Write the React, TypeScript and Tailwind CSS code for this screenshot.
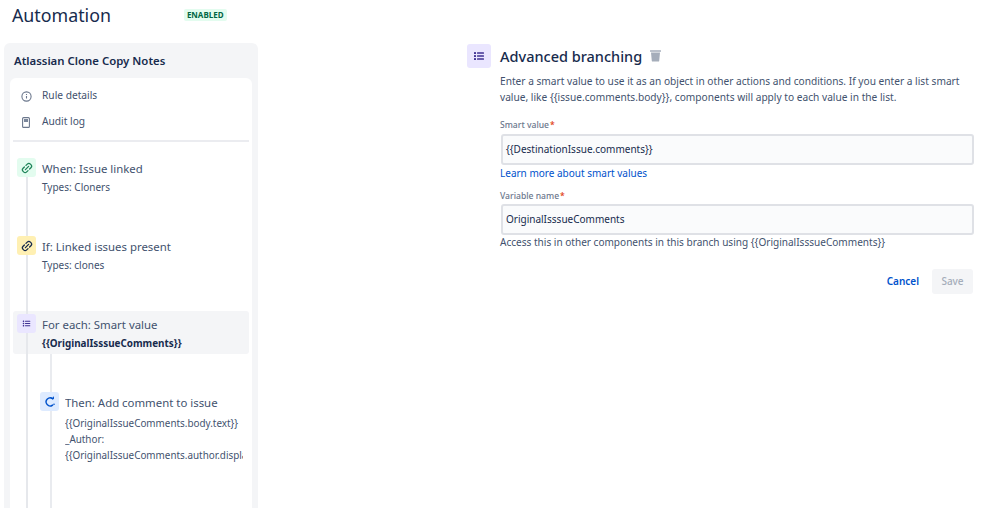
const font = "[font-family:'Noto_Sans',sans-serif]";

function ListIcon({ size = 12 }: { size?: number }) {
  return (
    <svg width={size} height={size} viewBox="0 0 12 12" fill="#403294">
      <rect x="1" y="2" width="2" height="2" rx="0.6" />
      <rect x="4" y="2.3" width="7" height="1.4" rx="0.5" />
      <rect x="1" y="5" width="2" height="2" rx="0.6" />
      <rect x="4" y="5.3" width="7" height="1.4" rx="0.5" />
      <rect x="1" y="8" width="2" height="2" rx="0.6" />
      <rect x="4" y="8.3" width="7" height="1.4" rx="0.5" />
    </svg>
  );
}

function LinkIcon({ color }: { color: string }) {
  return (
    <svg width="12" height="12" viewBox="0 0 12 12" fill="none" stroke={color} strokeWidth="1.3" strokeLinecap="round">
      <path d="M5 3.4 6.3 2.1a2.2 2.2 0 0 1 3.1 0l.5.5a2.2 2.2 0 0 1 0 3.1L8.6 7" />
      <path d="M7 8.6 5.7 9.9a2.2 2.2 0 0 1-3.1 0l-.5-.5a2.2 2.2 0 0 1 0-3.1L3.4 5" />
      <path d="M4.4 7.6 7.6 4.4" />
    </svg>
  );
}

function RefreshIcon() {
  return (
    <svg width="12" height="12" viewBox="0 0 12 12" fill="none" stroke="#0052cc" strokeWidth="1.4" strokeLinecap="round">
      <path d="M8.8 2.9A4 4 0 1 0 8.6 9.1" />
      <path d="M7.2 2.4h2.2V1" strokeWidth="1.1" />
      <circle cx="10" cy="8.3" r="0.8" fill="#0052cc" stroke="none" />
    </svg>
  );
}

function Badge({ className, children }: { className: string; children: React.ReactNode }) {
  return (
    <div className={`relative z-10 flex h-[19px] w-[19px] shrink-0 items-center justify-center rounded-[3px] ${className}`}>
      {children}
    </div>
  );
}

export default function App() {
  return (
    <div className={`${font} flex h-[508px] w-[999px] flex-col overflow-hidden bg-white text-[#172b4d]`}>
      <header className="flex h-[43px] shrink-0 items-start pl-3 pt-[2px]">
        <h1 className="text-[17.8px] leading-[27px] font-normal">Automation</h1>
        <span className="ml-[73px] mt-[7px] flex h-[12px] items-center rounded-[2px] bg-[#e3fcef] px-[3px] text-[8px] font-bold text-[#006644]">
          ENABLED
        </span>
      </header>

      <div className="flex min-h-0 flex-1">
        <aside className="ml-1 flex w-[254px] shrink-0 flex-col rounded-t-[6px] bg-[#f4f5f7] px-[6px]">
          <h2 className="ml-1 flex h-[35px] shrink-0 items-center pt-[1px] text-[11.4px] font-semibold">Atlassian Clone Copy Notes</h2>
          <div className="relative min-h-0 flex-1 overflow-hidden rounded-t-[6px] bg-white px-[3px]">
            <div className="flex h-[26px] items-center pt-[10px] pl-[8px] text-[10.2px] text-[#42526e]">
              <svg width="11" height="11" viewBox="0 0 11 11" fill="none" stroke="#6b778c" strokeWidth="1.1">
                <circle cx="5.5" cy="5.5" r="4.6" />
                <path d="M5.5 5v2.6M5.5 3v.9" />
              </svg>
              <span className="ml-[10px]">Rule details</span>
            </div>
            <div className="flex h-[26px] items-center pt-[10px] pl-[9px] text-[10.2px] text-[#42526e]">
              <svg width="8" height="11" viewBox="0 0 8 11" fill="none">
                <rect x="0.6" y="0.6" width="6.8" height="9.8" rx="1" stroke="#6b778c" strokeWidth="1.1" />
                <rect x="2" y="2" width="4" height="3" fill="#7a869a" />
              </svg>
              <span className="ml-[12px]">Audit log</span>
            </div>
            <div className="mt-[10px] h-[2px] bg-[#ebecf0]" />

            <div className="absolute left-[16px] top-[90px] z-[1] h-[400px] w-[2px] bg-[#e6e8ec]" />

            <div className="relative flex gap-[6px] pl-[4px] pt-[16px]">
              <Badge className="bg-[#e3fcef]"><LinkIcon color="#1f845a" /></Badge>
              <div className="pt-[2px]">
                <div className="text-[11.4px] leading-[18px] text-[#42526e]">When: Issue linked</div>
                <div className="text-[10px] leading-[18px] text-[#42526e]">Types: Cloners</div>
              </div>
            </div>

            <div className="relative mt-[40px] flex gap-[6px] pl-[4px]">
              <Badge className="bg-[#fff0b3]"><LinkIcon color="#172b4d" /></Badge>
              <div className="pt-[2px]">
                <div className="text-[11.4px] leading-[18px] text-[#42526e]">If: Linked issues present</div>
                <div className="text-[10px] leading-[18px] text-[#42526e]">Types: clones</div>
              </div>
            </div>

            <div className="relative mt-[37px] flex h-[43px] gap-[6px] rounded-[3px] bg-[#f4f5f7] pl-[4px] pt-[3px]">
              <Badge className="bg-[#eae6ff]"><ListIcon size={9} /></Badge>
              <div className="pt-[2px]">
                <div className="text-[11.4px] leading-[18px] text-[#42526e]">For each: Smart value</div>
                <div className="text-[9.9px] leading-[18px] font-bold">{"{{OriginalIsssueComments}}"}</div>
              </div>
            </div>

            <div className="absolute left-[40px] top-[276px] h-[200px] w-[2px] bg-[#e9ebef]" />

            <div className="relative mt-[38px] flex gap-[6px] pl-[27px] pr-[6px]">
              <Badge className="bg-[#deebff]"><RefreshIcon /></Badge>
              <div className="min-w-0 flex-1 overflow-hidden pt-[2px]">
                <div className="text-[11.4px] leading-[18px] text-[#42526e]">Then: Add comment to issue</div>
                <div className="mt-[3px] whitespace-nowrap text-[9.9px] leading-[16px] text-[#42526e]">
                  <div>{"{{OriginalIssueComments.body.text}}"}</div>
                  <div>_Author:</div>
                  <div>{"{{OriginalIssueComments.author.displayName}}"}</div>
                </div>
              </div>
            </div>
          </div>
        </aside>

        <main className="ml-[209px] w-[507px] shrink-0">
          <div className="flex items-center">
            <div className="flex h-[24px] w-[24px] items-center justify-center rounded-[3px] bg-[#eae6ff]">
              <ListIcon size={12} />
            </div>
            <h2 className="ml-[9px] text-[14.5px] leading-[26px] font-medium">Advanced branching</h2>
            <svg className="ml-[7px] mt-[-2px]" width="13" height="13" viewBox="0 0 13 13" fill="#a5adba">
              <rect x="1" y="1.2" width="11" height="1.6" rx="0.4" />
              <path d="M2 3.6h9l-.8 8.3a.8.8 0 0 1-.8.7H3.6a.8.8 0 0 1-.8-.7z" />
            </svg>
          </div>

          <div className="ml-[33px] mt-[4px]">
            <p className="whitespace-nowrap text-[10.17px] leading-[16px] text-[#42526e]">
              Enter a smart value to use it as an object in other actions and conditions. If you enter a list smart
              <br />
              {"value, like {{issue.comments.body}}, components will apply to each value in the list."}
            </p>

            <label className="mt-[14px] block text-[8.6px] leading-[12px] font-medium text-[#6b778c]">
              Smart value<span className="ml-[1px] text-[#de350b]">*</span>
            </label>
            <div className="ml-[1px] mt-[3px] flex h-[31px] w-[473px] items-center rounded-[3px] border-2 border-[#dfe1e6] bg-[#fafbfc] pl-[3px] text-[10px]">
              {"{{DestinationIssue.comments}}"}
            </div>
            <a className="block text-[10px] leading-[16px] text-[#0052cc]">Learn more about smart values</a>

            <label className="mt-[9px] block text-[8.6px] leading-[12px] font-medium text-[#6b778c]">
              Variable name<span className="ml-[1px] text-[#de350b]">*</span>
            </label>
            <div className="ml-[1px] mt-[2px] flex h-[31px] w-[473px] items-center rounded-[3px] border-2 border-[#dfe1e6] bg-[#fafbfc] pl-[3px] text-[10px]">
              OriginalIsssueComments
            </div>
            <p className="-mt-[1px] text-[10.05px] leading-[16px] text-[#42526e]">
              {"Access this in other components in this branch using {{OriginalIsssueComments}}"}
            </p>

            <div className="mt-[19px] flex w-[473px] items-center justify-end">
              <button className="text-[10px] font-semibold text-[#0052cc]">Cancel</button>
              <button className="ml-[13px] h-[25px] w-[41px] rounded-[3px] bg-[#f4f5f7] text-[10px] font-medium text-[#a5adba]">Save</button>
            </div>
          </div>
        </main>
      </div>
    </div>
  );
}
